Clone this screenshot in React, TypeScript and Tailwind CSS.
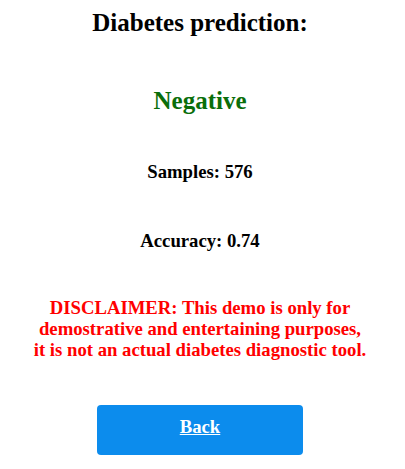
export default function App() {
  return (
    <div
      className="flex w-full flex-col items-center pr-[5px] text-center font-bold text-black"
      style={{ fontFamily: '"Liberation Serif", "Times New Roman", serif' }}
    >
      <h1 className="mt-[9px] text-[25px] leading-[28px]">Diabetes prediction:</h1>
      <h2 className="mt-[50px] text-[25px] leading-[28px] text-[#0a6e0a]">Negative</h2>
      <h3 className="mt-[46px] text-[18.72px] leading-[22px]">Samples: 576</h3>
      <h3 className="mt-[47px] text-[18.72px] leading-[22px]">Accuracy: 0.74</h3>
      <p className="mt-[45px] text-[18.72px] leading-[21px] text-[#ff0000]">
        DISCLAIMER: This demo is only for
        <br />
        demostrative and entertaining purposes,
        <br />
        it is not an actual diabetes diagnostic tool.
      </p>
      <a
        href="#"
        className="mt-[45px] flex h-[50px] w-[206px] items-center justify-center rounded-[4px] bg-[#0c8ced] pb-[6px] text-[18.72px] text-white underline"
      >
        Back
      </a>
    </div>
  );
}
